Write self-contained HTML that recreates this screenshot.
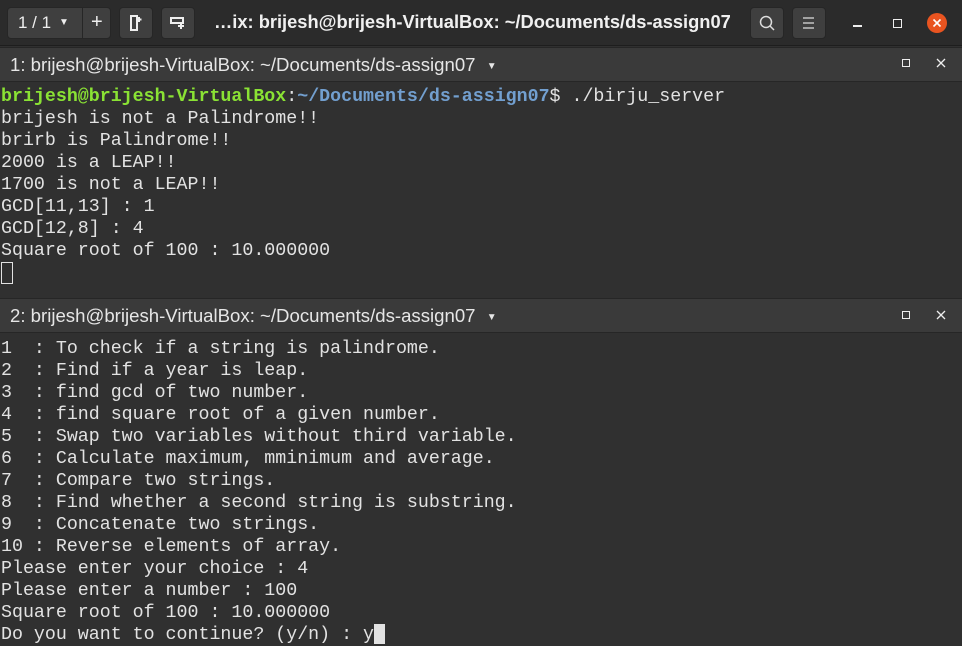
<!DOCTYPE html>
<html><head><style>
*{margin:0;padding:0;box-sizing:border-box}
body{width:962px;height:645px;background:#303030;overflow:hidden;position:relative;font-family:"Liberation Sans",sans-serif}
.hdr{position:absolute;left:0;top:0;width:962px;height:46px;background:#2b2b2b;border-bottom:1px solid #1e1e1e}
.btn{position:absolute;top:7px;height:32px;background:#3f3f3f;border-radius:4px;border:1px solid #262626;color:#eee;font-size:17px;text-align:center;line-height:30px}
.tbar{position:absolute;left:0;width:962px;height:35px;background:#3a3a3a;color:#e6e6e6;font-size:18.6px;line-height:34px;padding-left:10px;border-top:1px solid #262626;border-bottom:1px solid #262626}
.term{position:absolute;left:1px;font-family:"Liberation Mono",monospace;font-size:18.3px;line-height:22px;color:#e2e2e2;white-space:pre;letter-spacing:0}
.g{color:#8ae234;font-weight:bold}.b{color:#729fcf;font-weight:bold}
</style></head><body>
<div class="hdr">
 <div class="btn" style="left:7px;width:104px"><span style="position:absolute;left:10px;top:0">1 / 1</span><span style="position:absolute;left:51px;top:0;font-size:10px">▼</span><span style="position:absolute;left:74px;top:-1px;width:1px;height:31px;background:#262626"></span><span style="position:absolute;left:83px;top:-1px;font-size:20px">+</span></div>
 <div class="btn" style="left:119px;width:34px"><svg width="16" height="18" viewBox="0 0 16 18" style="margin-top:6px"><path d="M3 2h6v14H3z" fill="none" stroke="#eee" stroke-width="2"/><path d="M11 3v5M8.5 5.5h5" stroke="#eee" stroke-width="2"/></svg></div>
 <div class="btn" style="left:161px;width:34px"><svg width="18" height="16" viewBox="0 0 18 16" style="margin-top:7px"><path d="M2 3h12v5H2z" fill="none" stroke="#eee" stroke-width="2"/><path d="M12 8v6M9 11h6" stroke="#eee" stroke-width="2"/></svg></div>
 <div style="position:absolute;left:214px;top:11px;color:#f0f0f0;font-weight:bold;font-size:18.3px">…ix: brijesh@brijesh-VirtualBox: ~/Documents/ds-assign07</div>
 <div class="btn" style="left:750px;width:34px"><svg width="18" height="18" viewBox="0 0 18 18" style="margin-top:6px"><circle cx="8" cy="8" r="5.5" fill="none" stroke="#ddd" stroke-width="1.5"/><path d="M12 12l4 4" stroke="#ddd" stroke-width="1.5"/></svg></div>
 <div class="btn" style="left:792px;width:34px"><svg width="16" height="14" viewBox="0 0 16 14" style="margin-top:8px"><path d="M2 2h11M2 7h11M2 12h11" stroke="#ddd" stroke-width="1.3"/></svg></div>
 <div style="position:absolute;left:853px;top:25px;width:9px;height:2px;background:#eee"></div>
 <div style="position:absolute;left:893px;top:19px;width:9px;height:9px;border:1.5px solid #eee"></div>
 <div style="position:absolute;left:927px;top:13px;width:20px;height:20px;border-radius:50%;background:#e95420"><svg width="20" height="20" viewBox="0 0 20 20"><path d="M6.5 6.5l7 7M13.5 6.5l-7 7" stroke="#fff" stroke-width="1.6"/></svg></div>
</div>
<div class="tbar" style="top:47px">1: brijesh@brijesh-VirtualBox: ~/Documents/ds-assign07 <span style="font-size:10px;margin-left:6px;vertical-align:2px">▼</span>
 <div style="position:absolute;left:902px;top:11px;width:8px;height:8px;border:1.3px solid #eee"></div>
 <svg style="position:absolute;left:936px;top:10px" width="10" height="10"><path d="M1 1l8 8M9 1l-8 8" stroke="#eee" stroke-width="1.3"/></svg></div>
<div class="term" style="top:86px"><span class="g">brijesh@brijesh-VirtualBox</span>:<span class="b">~/Documents/ds-assign07</span>$ ./birju_server
brijesh is not a Palindrome!!
brirb is Palindrome!!
2000 is a LEAP!!
1700 is not a LEAP!!
GCD[11,13] : 1
GCD[12,8] : 4
Square root of 100 : 10.000000
<span style="display:inline-block;width:12px;height:22px;border:1px solid #e2e2e2;vertical-align:top"></span></div>
<div class="tbar" style="top:298px">2: brijesh@brijesh-VirtualBox: ~/Documents/ds-assign07 <span style="font-size:10px;margin-left:6px;vertical-align:2px">▼</span>
 <div style="position:absolute;left:902px;top:12px;width:8px;height:8px;border:1.3px solid #eee"></div>
 <svg style="position:absolute;left:936px;top:11px" width="10" height="10"><path d="M1 1l8 8M9 1l-8 8" stroke="#eee" stroke-width="1.3"/></svg></div>
<div class="term" style="top:338px">1  : To check if a string is palindrome.
2  : Find if a year is leap.
3  : find gcd of two number.
4  : find square root of a given number.
5  : Swap two variables without third variable.
6  : Calculate maximum, mminimum and average.
7  : Compare two strings.
8  : Find whether a second string is substring.
9  : Concatenate two strings.
10 : Reverse elements of array.
Please enter your choice : 4
Please enter a number : 100
Square root of 100 : 10.000000
Do you want to continue? (y/n) : y<span style="display:inline-block;width:11px;height:20px;background:#e2e2e2;vertical-align:top"></span></div>
</body></html>
